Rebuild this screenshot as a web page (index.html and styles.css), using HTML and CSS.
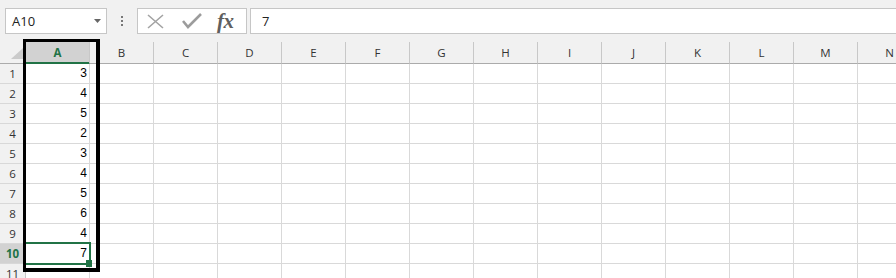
FILE: index.html
```html
<!DOCTYPE html>
<html>
<head>
<meta charset="utf-8">
<link rel="stylesheet" href="styles.css">
</head>
<body>
<div class="toolbar">
  <div class="namebox"><span>A10</span><svg width="7" height="4" viewBox="0 0 7 4"><polygon points="0,0 7,0 3.5,4" fill="#666"/></svg></div>
  <div class="dots"><svg width="2" height="10" viewBox="0 0 2 10"><rect x="0" y="0" width="2" height="2" fill="#777"/><rect x="0" y="4" width="2" height="2" fill="#777"/><rect x="0" y="8" width="2" height="2" fill="#777"/></svg></div>
  <div class="fxbox">
    <svg class="ic-x" width="17" height="15" viewBox="0 0 17 15"><path d="M1 1 L16 14 M16 1 L1 14" stroke="#a3a3a3" stroke-width="1.6" fill="none"/></svg>
    <svg class="ic-ok" width="20" height="16" viewBox="0 0 20 16"><polyline points="1,8 6,14 19,1" stroke="#9c9c9c" stroke-width="2.6" fill="none"/></svg>
    <span class="fx">fx</span>
  </div>
  <div class="formula">7</div>
</div>
<div class="sheet">
  <div class="row hdr">
    <div class="corner"><svg width="12" height="11" viewBox="0 0 12 11"><polygon points="12,0 12,11 0,11" fill="#cbcbcb"/></svg></div>
    <div class="ch active">A</div><div class="ch">B</div><div class="ch">C</div><div class="ch">D</div><div class="ch">E</div><div class="ch">F</div><div class="ch">G</div><div class="ch">H</div><div class="ch">I</div><div class="ch">J</div><div class="ch">K</div><div class="ch">L</div><div class="ch">M</div><div class="ch">N</div>
  </div>
  <div class="row"><div class="rh">1</div><div class="c">3</div><div class="c"></div><div class="c"></div><div class="c"></div><div class="c"></div><div class="c"></div><div class="c"></div><div class="c"></div><div class="c"></div><div class="c"></div><div class="c"></div><div class="c"></div><div class="c"></div><div class="c"></div></div>
  <div class="row"><div class="rh">2</div><div class="c">4</div><div class="c"></div><div class="c"></div><div class="c"></div><div class="c"></div><div class="c"></div><div class="c"></div><div class="c"></div><div class="c"></div><div class="c"></div><div class="c"></div><div class="c"></div><div class="c"></div><div class="c"></div></div>
  <div class="row"><div class="rh">3</div><div class="c">5</div><div class="c"></div><div class="c"></div><div class="c"></div><div class="c"></div><div class="c"></div><div class="c"></div><div class="c"></div><div class="c"></div><div class="c"></div><div class="c"></div><div class="c"></div><div class="c"></div><div class="c"></div></div>
  <div class="row"><div class="rh">4</div><div class="c">2</div><div class="c"></div><div class="c"></div><div class="c"></div><div class="c"></div><div class="c"></div><div class="c"></div><div class="c"></div><div class="c"></div><div class="c"></div><div class="c"></div><div class="c"></div><div class="c"></div><div class="c"></div></div>
  <div class="row"><div class="rh">5</div><div class="c">3</div><div class="c"></div><div class="c"></div><div class="c"></div><div class="c"></div><div class="c"></div><div class="c"></div><div class="c"></div><div class="c"></div><div class="c"></div><div class="c"></div><div class="c"></div><div class="c"></div><div class="c"></div></div>
  <div class="row"><div class="rh">6</div><div class="c">4</div><div class="c"></div><div class="c"></div><div class="c"></div><div class="c"></div><div class="c"></div><div class="c"></div><div class="c"></div><div class="c"></div><div class="c"></div><div class="c"></div><div class="c"></div><div class="c"></div><div class="c"></div></div>
  <div class="row"><div class="rh">7</div><div class="c">5</div><div class="c"></div><div class="c"></div><div class="c"></div><div class="c"></div><div class="c"></div><div class="c"></div><div class="c"></div><div class="c"></div><div class="c"></div><div class="c"></div><div class="c"></div><div class="c"></div><div class="c"></div></div>
  <div class="row"><div class="rh">8</div><div class="c">6</div><div class="c"></div><div class="c"></div><div class="c"></div><div class="c"></div><div class="c"></div><div class="c"></div><div class="c"></div><div class="c"></div><div class="c"></div><div class="c"></div><div class="c"></div><div class="c"></div><div class="c"></div></div>
  <div class="row"><div class="rh">9</div><div class="c">4</div><div class="c"></div><div class="c"></div><div class="c"></div><div class="c"></div><div class="c"></div><div class="c"></div><div class="c"></div><div class="c"></div><div class="c"></div><div class="c"></div><div class="c"></div><div class="c"></div><div class="c"></div></div>
  <div class="row"><div class="rh active">10</div><div class="c">7</div><div class="c"></div><div class="c"></div><div class="c"></div><div class="c"></div><div class="c"></div><div class="c"></div><div class="c"></div><div class="c"></div><div class="c"></div><div class="c"></div><div class="c"></div><div class="c"></div><div class="c"></div></div>
  <div class="row"><div class="rh">11</div><div class="c"></div><div class="c"></div><div class="c"></div><div class="c"></div><div class="c"></div><div class="c"></div><div class="c"></div><div class="c"></div><div class="c"></div><div class="c"></div><div class="c"></div><div class="c"></div><div class="c"></div><div class="c"></div></div>
  <div class="sel"></div>
  <div class="handle"></div>
  <div class="hl"></div>
</div>
</body>
</html>
```
FILE: styles.css
```css
* { box-sizing: border-box; }
html, body { margin: 0; height: 278px; overflow: hidden; }
body { background: #f1f1f1; font-family: "Open Sans", "Noto Sans", sans-serif; }

.toolbar { height: 42px; display: flex; align-items: flex-start; padding: 8px 0 0 5px; }
.namebox { width: 102px; height: 26px; flex: none; background: #fff; border: 1px solid #c6c6c6; display: flex; align-items: center; justify-content: space-between; padding: 0 5px 0 6px; font-size: 13px; color: #222; }
.dots { width: 30px; height: 26px; flex: none; display: flex; align-items: center; justify-content: center; }
.fxbox { width: 110px; height: 26px; flex: none; background: #fff; border: 1px solid #c6c6c6; display: flex; align-items: center; padding-left: 9px; }
.ic-x { flex: none; }
.ic-ok { flex: none; margin-left: 18px; }
.fx { font-family: "Liberation Serif", serif; font-style: italic; font-weight: bold; font-size: 21px; color: #5f5f5f; margin-left: 15px; letter-spacing: -0.5px; line-height: 24px; }
.formula { flex: 1; margin-left: 3px; margin-right: -3px; height: 26px; background: #fff; border: 1px solid #c6c6c6; padding-left: 11px; font-size: 13px; color: #222; display: flex; align-items: center; }

.sheet { position: relative; }
.row { display: flex; height: 20px; overflow: hidden; }
.row.hdr { height: 22px; }
.corner { width: 26px; flex: none; background: #f1f1f1; border-right: 1px solid #c6c6c6; border-bottom: 1px solid #ababab; display: flex; align-items: flex-end; justify-content: flex-end; padding: 0 2px 4px 0; }
.ch { width: 64px; flex: none; background: #f1f1f1; border-right: 1px solid #c8c8c8; border-bottom: 1px solid #ababab; text-align: center; font-size: 11.5px; color: #333; line-height: 21px; }
.ch.active { background: #d2d2d2; color: #217346; font-weight: 700; border-bottom-color: #217346; box-shadow: inset 0 -1px 0 #217346; }
.rh { width: 26px; flex: none; background: #f1f1f1; border-right: 1px solid #c6c6c6; border-bottom: 1px solid #d8d8d8; text-align: center; font-size: 11.5px; color: #333; line-height: 19px; }
.rh.active { background: #d2d2d2; color: #217346; font-weight: 700; }
.c { width: 64px; flex: none; background: #fff; border-right: 1px solid #d9d9d9; border-bottom: 1px solid #d9d9d9; text-align: right; padding-right: 2px; font-family: "Liberation Sans", Arial, sans-serif; font-size: 12px; color: #000; line-height: 19px; }

.sel { position: absolute; left: 24px; top: 200px; width: 67px; height: 23px; border: 2px solid #217346; }
.handle { position: absolute; left: 86px; top: 218px; width: 6px; height: 7px; background: #217346; }
.hl { position: absolute; left: 23px; top: -3px; width: 77px; height: 233px; border-style: solid; border-color: #000; border-width: 3px 4px 4px 3px; }
```
